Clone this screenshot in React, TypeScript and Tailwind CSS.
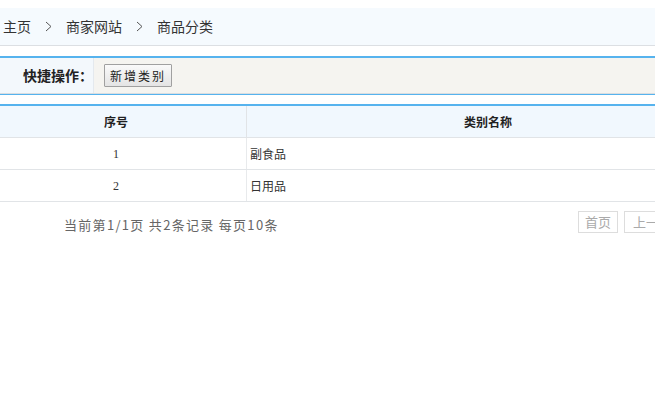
import React from "react";

const font = { fontFamily: '"Noto Sans CJK SC", "Liberation Sans", sans-serif' };

function Chevron() {
  return (
    <svg width="7" height="11" viewBox="0 0 7 11" className="mx-[14px]" fill="none">
      <path d="M1 1 L6 5.5 L1 10" stroke="#555" strokeWidth="1" />
    </svg>
  );
}

export default function App() {
  const rows = [
    { id: "1", name: "副食品" },
    { id: "2", name: "日用品" },
  ];
  return (
    <div className="w-[655px] h-[413px] bg-white overflow-hidden" style={font}>
      <div className="h-[8px]" />
      <div className="h-[38px] bg-[#f5fafe] border-b border-[#dcdfe3] flex items-center pl-[3px] text-[14px] text-[#333]">
        <span>主页</span>
        <Chevron />
        <span>商家网站</span>
        <Chevron />
        <span>商品分类</span>
      </div>
      <div className="h-[10px]" />
      <div className="h-[38px] border-t-[2px] border-[#56b3ee] border-b border-b-[#d9dde0] bg-[#f5f4f0] flex">
        <div className="w-[94px] bg-[#f3f8fc] border-r border-[#e4e9ee] flex items-center justify-end pr-0 text-[14px] font-bold text-[#222]">
          快捷操作：
        </div>
        <div className="flex items-center pl-[10px]">
          <button className="w-[68px] h-[23px] border border-[#a0a0a0] bg-gradient-to-b from-[#fafafa] to-[#e4e4e4] text-[12px] text-[#222] tracking-[2px] leading-none rounded-[1px]">
            新增类别
          </button>
        </div>
      </div>
      <div className="h-[1px] bg-[#56b3ee]" />
      <div className="h-[9px]" />
      <div className="w-[760px]">
        <div className="flex h-[34px] border-t-[2px] border-[#56b3ee] border-b border-b-[#e1e4e7] bg-[#f1f8fe] text-[12px] font-bold text-[#222]">
          <div className="w-[247px] border-r border-[#e1e4e7] flex items-center justify-center pr-[14px]">序号</div>
          <div className="w-[482px] flex items-center justify-center">类别名称</div>
        </div>
        {rows.map((r) => (
          <div key={r.id} className="flex h-[32px] border-b border-[#e1e4e7] text-[12px] text-[#333]">
            <div
              className="w-[247px] border-r border-[#e8eaec] flex items-center justify-center pr-[14px]"
              style={{ fontFamily: '"Liberation Serif", serif' }}
            >
              {r.id}
            </div>
            <div className="flex items-center pl-[3px]">{r.name}</div>
          </div>
        ))}
      </div>
      <div className="flex items-center h-[22px] mt-[9px] w-[720px]">
        <div className="shrink-0 pl-[64px] pt-[5px] text-[13px] text-[#666] w-[578px] whitespace-nowrap tracking-[1.3px]">当前第1/1页 共2条记录 每页10条</div>
        <div className="flex gap-[6px] shrink-0">
          <span className="h-[22px] w-[40px] justify-center border border-[#dddddd] text-[13px] text-[#aaa] flex items-center whitespace-nowrap">首页</span>
          <span className="h-[22px] px-[8px] border border-[#dddddd] text-[13px] text-[#aaa] flex items-center whitespace-nowrap">上一页</span>
        </div>
      </div>
    </div>
  );
}
